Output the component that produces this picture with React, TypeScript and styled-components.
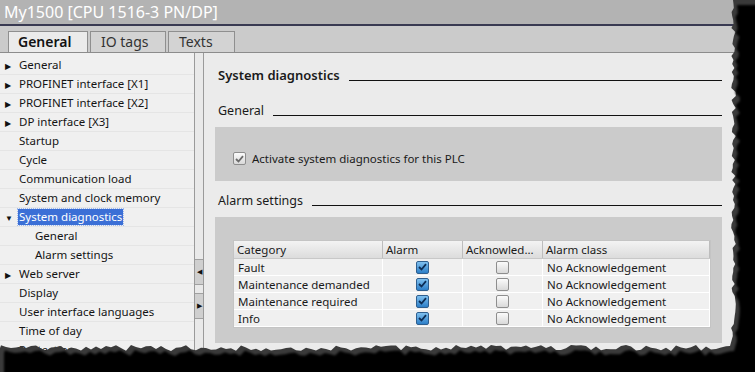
import React from 'react';
import styled, { createGlobalStyle } from 'styled-components';

const Global = createGlobalStyle`
  html, body { margin: 0; padding: 0; background: #000; }
  body { font-family: "Noto Sans", "Open Sans", sans-serif; }
`;

const Screen = styled.div`
  position: relative;
  width: 755px;
  height: 372px;
  overflow: hidden;
  background: #f0f0f0;
`;

const TitleBar = styled.div`
  height: 24px;
  background: #b3b3b3;
  color: #fff;
  font-size: 16px;
  line-height: 24px;
  padding-left: 4px;
  border-bottom: 2px solid #393a52;
  box-shadow: 0 1px 0 #d4d4e0;
`;

const TabStrip = styled.div`
  height: 22px;
  padding: 4px 0 0 8px;
  background: #cbcbcb;
  border-bottom: 1px solid #8c8c8c;
  display: flex;
  gap: 2px;
  align-items: flex-end;
`;

const Tab = styled.div<{ $active?: boolean; $width: number }>`
  height: 21px;
  box-sizing: border-box;
  width: ${p => p.$width}px;
  padding-left: ${p => (p.$active ? 9 : 10)}px;
  background: ${p => (p.$active ? '#ebebeb' : '#d3d3d3')};
  border: 1px solid #8f8f8f;
  border-bottom: none;
  font-size: 14px;
  font-weight: ${p => (p.$active ? 600 : 400)};
  color: ${p => (p.$active ? '#111' : '#333')};
  line-height: 20px;
`;

const Body = styled.div`
  display: flex;
  height: 320px;
`;

const Tree = styled.div`
  width: 194px;
  padding-top: 3px;
  background: #f0f0f0;
  border-right: 1px solid #9a9a9a;
`;

const Row = styled.div<{ $level: number }>`
  height: 19px;
  box-sizing: border-box;
  border-bottom: 1px solid #e5e5e5;
  display: flex;
  align-items: center;
  padding-left: ${p => (p.$level ? 34 : 5)}px;
  font-size: 11.5px;
  color: #141414;
`;

const Arrow = styled.span`
  width: 13px;
  font-size: 8px;
  color: #111;
`;

const Label = styled.span<{ $selected?: boolean }>`
  padding: 0 1px;
  line-height: 16px;
  background: ${p => (p.$selected ? '#3b6fd6' : 'transparent')};
  color: ${p => (p.$selected ? '#fff' : 'inherit')};
  outline: ${p => (p.$selected ? '1px dotted #9db8ee' : 'none')};
`;

const Splitter = styled.div`
  width: 8px;
  background: #e9e9e9;
  border-right: 1px solid #9a9a9a;
  display: flex;
  flex-direction: column;
  padding-top: 206px;
`;

const SplitBtn = styled.div`
  height: 24px;
  background: #cfcfcf;
  border-top: 1px solid #a0a0a0;
  border-bottom: 1px solid #a0a0a0;
  margin-bottom: 8px;
  font-size: 7px;
  line-height: 24px;
  text-align: center;
  color: #111;
`;

const Panel = styled.div`
  flex: 1;
  background: #ebebeb;
  padding: 12px 33px 0 11px;
`;

const Heading = styled.div<{ $bold?: boolean }>`
  display: flex;
  align-items: flex-end;
  gap: 9px;
  height: 19px;
  margin-left: 3px;
  font-size: ${p => (p.$bold ? 13 : 12.5)}px;
  font-weight: ${p => (p.$bold ? 600 : 400)};
  color: #1a1a1a;
  &::after {
    content: '';
    flex: 1;
    border-bottom: 1px solid #111;
    margin-bottom: 3px;
  }
`;

const Spacer = styled.div<{ $h: number }>`
  height: ${p => p.$h}px;
`;

const Section = styled.div<{ $h: number; $top: number }>`
  height: ${p => p.$h}px;
  background: #cbcbcb;
  margin-top: 8px;
  box-sizing: border-box;
  padding: ${p => p.$top}px 0 0 18px;
`;

const CheckLine = styled.label`
  display: flex;
  align-items: center;
  gap: 6px;
  font-size: 11.5px;
  color: #1a1a1a;
`;

const Box = styled.span<{ $blue?: boolean }>`
  width: 13px;
  height: 13px;
  box-sizing: border-box;
  border-radius: 2px;
  border: 1px solid ${p => (p.$blue ? '#2f5f8f' : '#8e8e8e')};
  background: ${p =>
    p.$blue
      ? 'linear-gradient(#7fc0ef, #2d7fc8)'
      : 'linear-gradient(#fbfbfb, #d9d9d9)'};
  display: inline-flex;
  align-items: center;
  justify-content: center;
`;

const Table = styled.div`
  width: 476px;
  border: 1px solid #c4c4c4;
  font-size: 11.5px;
  color: #1a1a1a;
`;

const TRow = styled.div<{ $head?: boolean }>`
  display: grid;
  grid-template-columns: 149px 80px 80px 1fr;
  height: ${p => (p.$head ? 17 : 16)}px;
  background: ${p => (p.$head ? 'linear-gradient(#f3f3f3, #dcdcdc)' : '#f0f0f0')};
  border-bottom: 1px solid ${p => (p.$head ? '#c8c8c8' : '#ffffff')};
`;

const Cell = styled.div<{ $center?: boolean }>`
  display: flex;
  align-items: center;
  justify-content: ${p => (p.$center ? 'center' : 'flex-start')};
  padding-left: ${p => (p.$center ? 0 : 4)}px;
  border-right: 1px solid #fff;
  overflow: hidden;
  white-space: nowrap;
`;

const HeadCell = styled(Cell)`
  border-right: 1px solid #bdbdbd;
  padding-left: 3px;
`;

const Tick = ({ color }: { color: string }) => (
  <svg width="9" height="8" viewBox="0 0 9 8">
    <path d="M1 4 L3.5 6.5 L8 1.2" fill="none" stroke={color} strokeWidth="1.8" />
  </svg>
);

const Torn = styled.svg`
  position: absolute;
  left: 0;
  top: 0;
`;

const treeItems: [string, number, 'r' | 'd' | ''][] = [
  ['General', 0, 'r'],
  ['PROFINET interface [X1]', 0, 'r'],
  ['PROFINET interface [X2]', 0, 'r'],
  ['DP interface [X3]', 0, 'r'],
  ['Startup', 0, ''],
  ['Cycle', 0, ''],
  ['Communication load', 0, ''],
  ['System and clock memory', 0, ''],
  ['System diagnostics', 0, 'd'],
  ['General', 1, ''],
  ['Alarm settings', 1, ''],
  ['Web server', 0, 'r'],
  ['Display', 0, ''],
  ['User interface languages', 0, ''],
  ['Time of day', 0, ''],
  ['Protection', 0, ''],
];

const alarms = ['Fault', 'Maintenance demanded', 'Maintenance required', 'Info'];

function tornPath() {
  // jagged right and bottom edges of the cut-out screenshot
  const pts: string[] = ['733,0'];
  let seed = 7;
  const rnd = () => {
    seed = (seed * 9301 + 49297) % 233280;
    return seed / 233280;
  };
  for (let y = 4; y < 340; y += 4) pts.push(`${(731 + rnd() * 5).toFixed(1)},${y}`);
  pts.push('730,346');
  for (let x = 726; x > 0; x -= 5) pts.push(`${x},${(345 + rnd() * 6).toFixed(1)}`);
  pts.push('0,348', '0,372', '755,372', '755,0');
  return pts.join(' ');
}

const edge = tornPath();

export default function App() {
  return (
    <Screen>
      <Global />
      <TitleBar>My1500 [CPU 1516-3 PN/DP]</TitleBar>
      <TabStrip>
        <Tab $active $width={80}>General</Tab>
        <Tab $width={76}>IO tags</Tab>
        <Tab $width={67}>Texts</Tab>
      </TabStrip>
      <Body>
        <Tree>
          {treeItems.map(([name, level, arrow], i) => (
            <Row key={i} $level={level}>
              {level === 0 && <Arrow>{arrow === 'r' ? '▶' : arrow === 'd' ? '▼' : ''}</Arrow>}
              <Label $selected={i === 8}>{name}</Label>
            </Row>
          ))}
        </Tree>
        <Splitter>
          <SplitBtn>◀</SplitBtn>
          <SplitBtn>▶</SplitBtn>
        </Splitter>
        <Panel>
          <Heading $bold>System diagnostics</Heading>
          <Spacer $h={16} />
          <Heading>General</Heading>
          <Section $h={54} $top={24}>
            <CheckLine>
              <Box>
                <Tick color="#6a6a6a" />
              </Box>
              Activate system diagnostics for this PLC
            </CheckLine>
          </Section>
          <Spacer $h={9} />
          <Heading>Alarm settings</Heading>
          <Section $h={126} $top={23}>
            <Table>
              <TRow $head>
                <HeadCell>Category</HeadCell>
                <HeadCell>Alarm</HeadCell>
                <HeadCell>Acknowled...</HeadCell>
                <HeadCell>Alarm class</HeadCell>
              </TRow>
              {alarms.map(a => (
                <TRow key={a}>
                  <Cell>{a}</Cell>
                  <Cell $center>
                    <Box $blue>
                      <Tick color="#0d2d55" />
                    </Box>
                  </Cell>
                  <Cell $center>
                    <Box />
                  </Cell>
                  <Cell>No Acknowledgement</Cell>
                </TRow>
              ))}
            </Table>
          </Section>
        </Panel>
      </Body>
      <Torn width="755" height="372">
        <defs>
          <filter id="soft" x="-5%" y="-5%" width="110%" height="110%">
            <feGaussianBlur stdDeviation="1.2" />
          </filter>
        </defs>
        <polygon points={edge} fill="#3a3a3a" />
        <polygon points={edge} fill="#000" filter="url(#soft)" transform="translate(4,5)" />
      </Torn>
    </Screen>
  );
}
